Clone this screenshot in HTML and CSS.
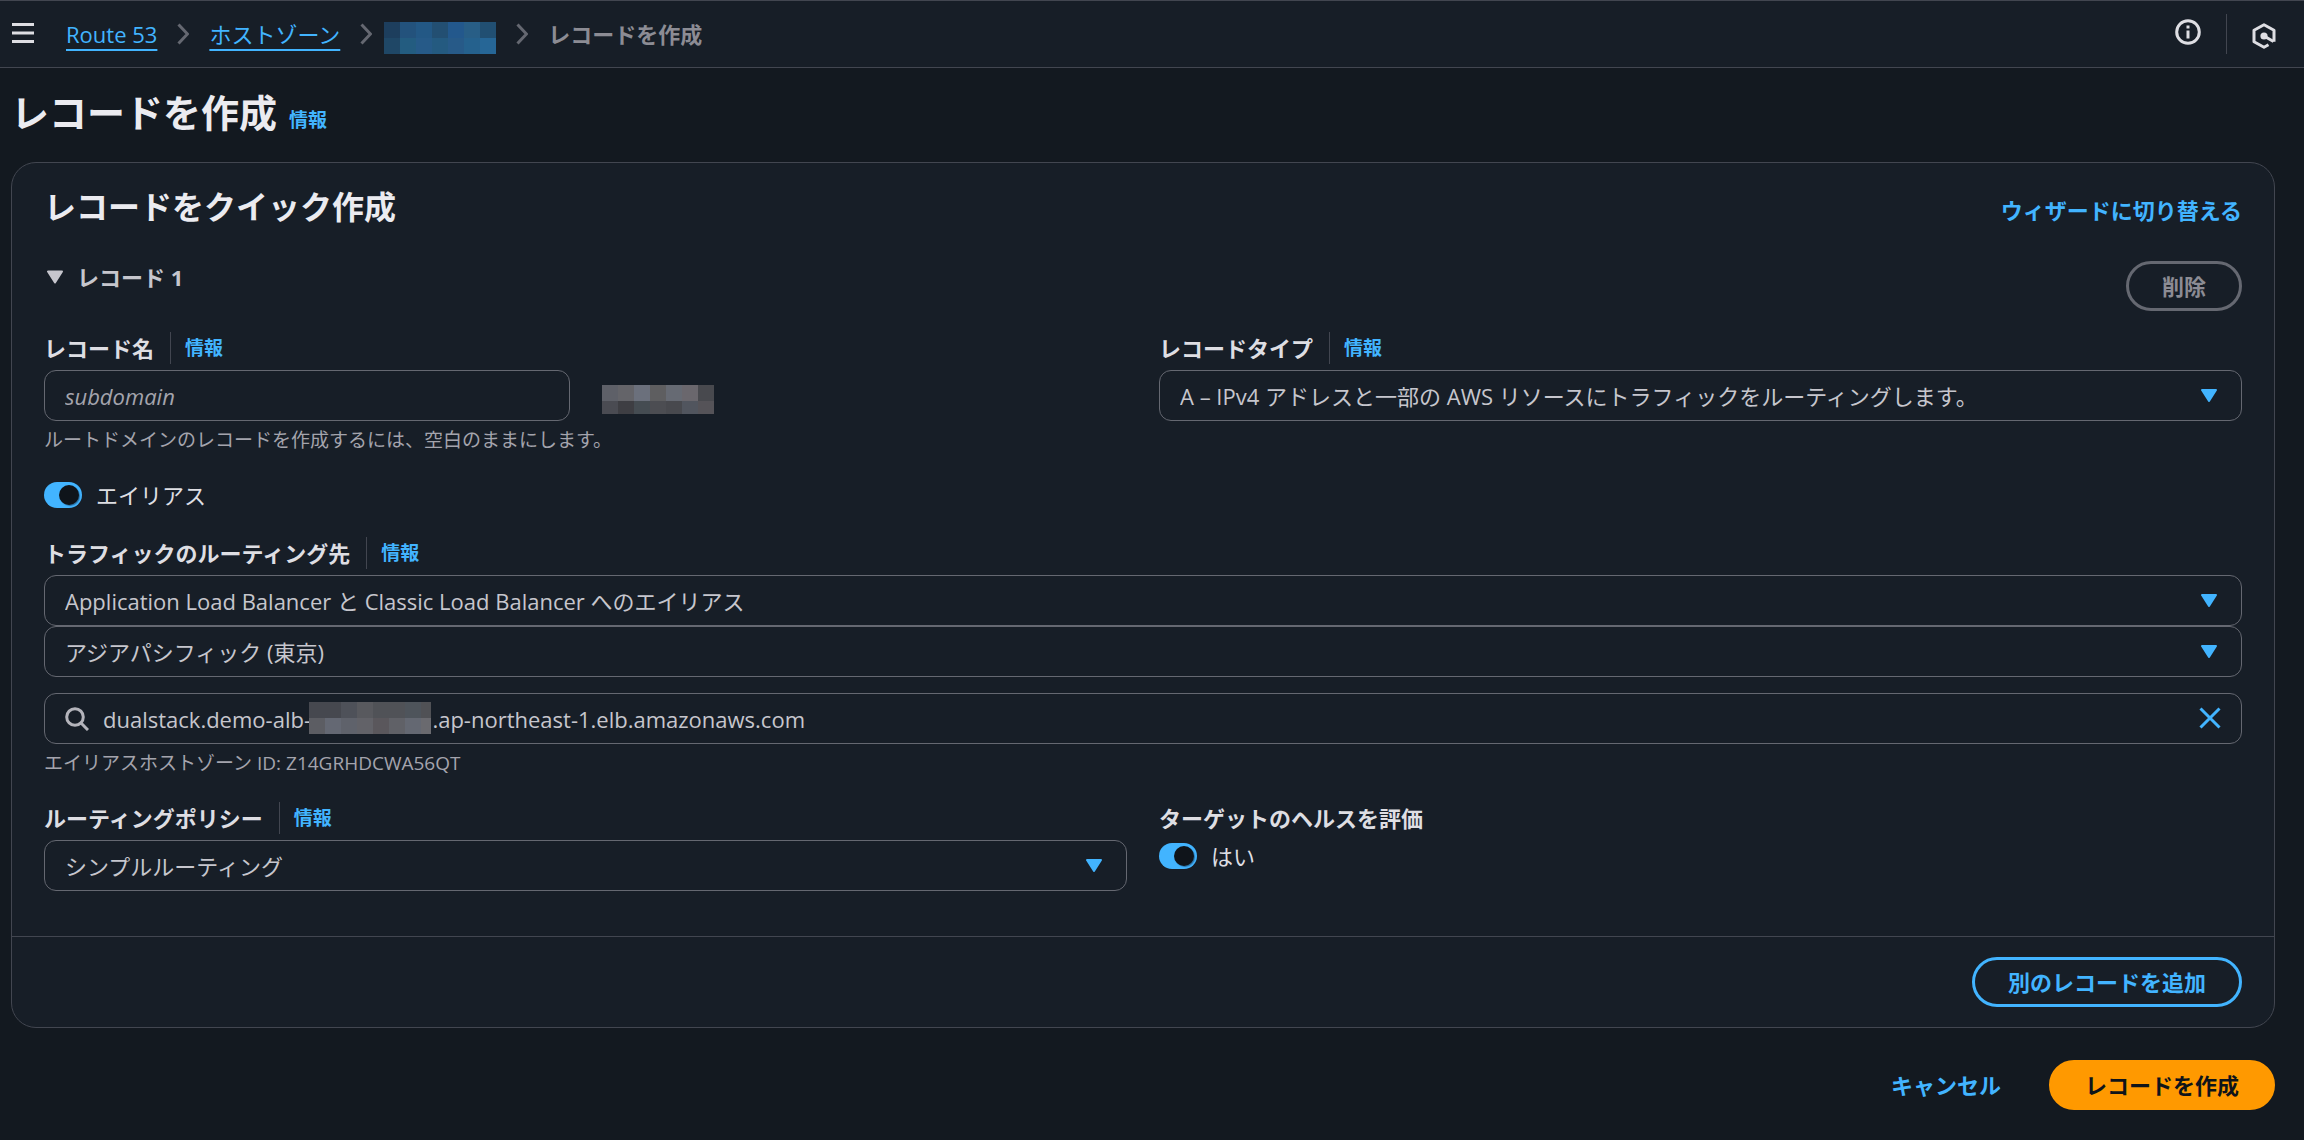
FILE: index.html
```html
<!doctype html>
<html lang="ja">
<head>
<meta charset="utf-8">
<title>レコードを作成 | Route 53</title>
<link rel="stylesheet" href="styles.css">
</head>

<body>
<header class="topbar">
    <button class="icon-btn menu" type="button" aria-label="メニュー">
        <svg width="22" height="20" viewBox="0 0 22 20"><path d="M0 1.5h22M0 10h22M0 18.5h22" stroke="currentColor" stroke-width="3"/></svg>
    </button>
    <nav class="crumbs">
        <a class="crumb" href="#">Route 53</a>
        <svg class="sep" width="12" height="22" viewBox="0 0 12 22"><path d="M1.5 1.5l9 9.5-9 9.5"/></svg>
        <a class="crumb" href="#">ホストゾーン</a>
        <svg class="sep sep-tight" width="12" height="22" viewBox="0 0 12 22"><path d="M1.5 1.5l9 9.5-9 9.5"/></svg>
        <a class="crumb-masked" href="#" aria-label="ドメイン">
            <svg class="mosaic" width="112" height="32" viewBox="0 0 112 32" shape-rendering="crispEdges">
                <path fill="#1d3e5d" d="M0 0h16v16H0z"/><path fill="#23527c" d="M16 0h16v16H16z"/><path fill="#235885" d="M32 0h16v16H32z"/><path fill="#234f72" d="M48 0h16v16H48z"/><path fill="#23588c" d="M64 0h16v16H64z"/><path fill="#285e86" d="M80 0h16v16H80z"/><path fill="#214f72" d="M96 0h16v16H96z"/>
                <path fill="#1f4766" d="M0 16h16v16H0z"/><path fill="#235c80" d="M16 16h16v16H16z"/><path fill="#265a88" d="M32 16h16v16H32z"/><path fill="#245a80" d="M48 16h16v16H48z"/><path fill="#275a88" d="M64 16h16v16H64z"/><path fill="#25618d" d="M80 16h16v16H80z"/><path fill="#266696" d="M96 16h16v16H96z"/>
            </svg>
        </a>
        <svg class="sep" width="12" height="22" viewBox="0 0 12 22"><path d="M1.5 1.5l9 9.5-9 9.5"/></svg>
        <span class="crumb-current">レコードを作成</span>
    </nav>
    <div class="tools">
        <button class="icon-btn help" type="button" aria-label="情報パネル">
            <svg width="26" height="26" viewBox="0 0 26 26" fill="none" stroke="currentColor" stroke-width="3"><circle cx="13" cy="13" r="11.3"/><path d="M13 11.5v8M13 6.5v3"/></svg>
        </button>
        <span class="tools-line"></span>
        <button class="icon-btn hex" type="button" aria-label="ツール">
            <svg width="24" height="26" viewBox="0 0 24 26" fill="none" stroke="currentColor" stroke-width="3" stroke-linejoin="round"><path d="M16.5 21.8L12 24.2 2 18.8V7.2L12 1.8l10 5.4v11.6"/><path d="M12 13l9.5 5.5"/><circle cx="12" cy="13" r="3.6" fill="currentColor" stroke="none"/></svg>
        </button>
    </div>
</header>

<main class="page">
    <div class="page-head">
        <h1 class="title">レコードを作成</h1>
        <a class="info" href="#">情報</a>
    </div>

    <form>
    <section class="card">
        <div class="card-body">
            <div class="card-head">
                <h2 class="subtitle">レコードをクイック作成</h2>
                <a class="switch-link" href="#">ウィザードに切り替える</a>
            </div>
            <div class="record-head">
                <button class="expander" type="button">
                    <svg width="16" height="14" viewBox="0 0 16 13"><path d="M1 1h14L8 12z" fill="currentColor" stroke="currentColor" stroke-width="2" stroke-linejoin="round"/></svg>
                    レコード 1
                </button>
                <button class="btn btn-disabled" type="button" disabled>削除</button>
            </div>

            <div class="rows">
                <div class="cols">
                    <div class="field">
                        <div class="label-row"><label class="label" for="name">レコード名</label><a class="info info-line" href="#">情報</a></div>
                        <div class="cols name-row">
                            <input class="control" id="name" type="text" placeholder="subdomain">
                            <svg class="mosaic" width="112" height="29" viewBox="0 0 112 29" shape-rendering="crispEdges">
                                <path fill="#5e6068" d="M0 0h16v16H0z"/><path fill="#646469" d="M16 0h16v16H16z"/><path fill="#6b707c" d="M32 0h16v16H32z"/><path fill="#5e5e60" d="M48 0h16v16H48z"/><path fill="#666a73" d="M64 0h16v16H64z"/><path fill="#6a676d" d="M80 0h16v16H80z"/><path fill="#48494e" d="M96 0h16v16H96z"/>
                                <path fill="#4a4b52" d="M0 16h16v13H0z"/><path fill="#3e3e43" d="M16 16h16v13H16z"/><path fill="#454c52" d="M32 16h16v13H32z"/><path fill="#4c4d52" d="M48 16h16v13H48z"/><path fill="#48494e" d="M64 16h16v13H64z"/><path fill="#51555e" d="M80 16h16v13H80z"/><path fill="#555358" d="M96 16h16v13H96z"/>
                            </svg>
                        </div>
                        <p class="hint">ルートドメインのレコードを作成するには、空白のままにします。</p>
                    </div>
                    <div class="field">
                        <div class="label-row"><label class="label" for="type">レコードタイプ</label><a class="info info-line" href="#">情報</a></div>
                        <div class="select">
                            <select class="control" id="type"><option>A – IPv4 アドレスと一部の AWS リソースにトラフィックをルーティングします。</option></select>
                            <svg class="caret" width="16" height="13" viewBox="0 0 16 13"><path d="M1 1h14L8 12z"/></svg>
                        </div>
                    </div>
                </div>

                <label class="toggle"><input type="checkbox" checked>エイリアス</label>

                <div class="field">
                    <div class="label-row"><label class="label" for="target">トラフィックのルーティング先</label><a class="info info-line" href="#">情報</a></div>
                    <div class="select">
                        <select class="control" id="target"><option>Application Load Balancer と Classic Load Balancer へのエイリアス</option></select>
                        <svg class="caret" width="16" height="13" viewBox="0 0 16 13"><path d="M1 1h14L8 12z"/></svg>
                    </div>
                    <div class="select">
                        <select class="control" aria-label="リージョン"><option>アジアパシフィック (東京)</option></select>
                        <svg class="caret" width="16" height="13" viewBox="0 0 16 13"><path d="M1 1h14L8 12z"/></svg>
                    </div>
                    <div class="search">
                        <svg class="search-icon" width="24" height="24" viewBox="0 0 24 24" fill="none" stroke="currentColor" stroke-width="3"><circle cx="10" cy="10" r="8.3"/><path d="M16 16l7 7"/></svg>
                        <input class="control" type="text" aria-label="ロードバランサー" value="dualstack.demo-alb-&emsp;&emsp;&emsp;&emsp;&emsp;&nbsp;&nbsp;.ap-northeast-1.elb.amazonaws.com">
                        <svg class="mosaic search-mask" width="122" height="32" viewBox="0 0 122 32" shape-rendering="crispEdges">
                            <path fill="#46484f" d="M0 0h32v16H0z"/><path fill="#4e5159" d="M32 0h16v16H32z"/><path fill="#58595e" d="M48 0h16v16H48z"/><path fill="#505257" d="M64 0h32v16H64z"/><path fill="#4e545b" d="M96 0h16v16H96z"/><path fill="#505155" d="M112 0h10v16h-10z"/>
                            <path fill="#5c5d63" d="M0 16h16v16H0z"/><path fill="#646873" d="M16 16h16v16H16z"/><path fill="#5f626b" d="M32 16h16v16H32z"/><path fill="#626268" d="M48 16h16v16H48z"/><path fill="#5a575c" d="M64 16h16v16H64z"/><path fill="#606167" d="M80 16h16v16H80z"/><path fill="#646872" d="M96 16h16v16H96z"/><path fill="#6a6a6f" d="M112 16h10v16h-10z"/>
                        </svg>
                        <button class="icon-btn clear" type="button" aria-label="クリア">
                            <svg width="22" height="22" viewBox="0 0 22 22"><path d="M1.5 1.5l19 19M20.5 1.5l-19 19" stroke="currentColor" stroke-width="3"/></svg>
                        </button>
                    </div>
                    <p class="hint">エイリアスホストゾーン ID: Z14GRHDCWA56QT</p>
                </div>

                <div class="cols">
                    <div class="field">
                        <div class="label-row"><label class="label" for="policy">ルーティングポリシー</label><a class="info info-line" href="#">情報</a></div>
                        <div class="select">
                            <select class="control" id="policy"><option>シンプルルーティング</option></select>
                            <svg class="caret" width="16" height="13" viewBox="0 0 16 13"><path d="M1 1h14L8 12z"/></svg>
                        </div>
                    </div>
                    <div class="field">
                        <div class="label-row"><span class="label" id="health">ターゲットのヘルスを評価</span></div>
                        <label class="toggle"><input type="checkbox" aria-describedby="health" checked>はい</label>
                    </div>
                </div>
            </div>
        </div>
        <div class="card-foot">
            <button class="btn btn-outline" type="button">別のレコードを追加</button>
        </div>
    </section>

    <div class="actions">
        <button class="btn btn-link" type="button">キャンセル</button>
        <button class="btn btn-primary" type="submit">レコードを作成</button>
    </div>
    </form>
</main>
</body>
</html>
```
FILE: styles.css
```css
* { box-sizing: border-box; }
body { margin: 0; background-color: #131920; color: #dedee3; font-family: "Open Sans", "Noto Sans CJK JP", sans-serif; font-size: 22px; line-height: 32px; }
h1, h2, p { margin: 0; }
a { color: #42b4ff; text-decoration: none; }
button, input, select { font: inherit; color: inherit; margin: 0; }
button { cursor: pointer; }
svg { display: block; flex: none; }

/* top bar */
.topbar { display: flex; align-items: center; height: 68px; padding: 0 28px 0 12px; background-color: #171e27; border-top: 1px solid #424650; border-bottom: 1px solid #424650; }
.icon-btn { padding: 0; border: none; background: none; color: #dedee3; }
.menu { margin-right: 32px; padding-bottom: 2px; }
.crumbs { display: flex; align-items: center; }
.crumb { text-decoration: underline; text-decoration-thickness: 2px; text-underline-offset: 6px; }
.crumb-masked { padding-top: 8px; }
.crumb-current { color: #8c8c94; font-weight: bold; }
.sep { margin: 0 20px; fill: none; stroke: #656871; stroke-width: 3; }
.sep-tight { margin-right: 12px; }
.tools { display: flex; align-items: center; gap: 25px; margin-left: auto; }
.tools-line { width: 1px; height: 40px; background-color: #424650; }
.help { padding-bottom: 4px; }
.hex { padding-top: 4px; }

/* page */
.page { padding: 20px 29px 30px 11px; }
.page-head { display: flex; align-items: baseline; gap: 12px; margin-bottom: 26px; }
.title { font-size: 38px; line-height: 48px; color: #ebebf0; }
.info { font-size: 19px; font-weight: bold; }
.card { background-color: #171e27; border: 1px solid #424650; border-radius: 25px; }
.card-body { padding: 25px 32px 45px; }
.card-head { display: flex; align-items: flex-end; justify-content: space-between; margin-bottom: 35px; }
.subtitle { font-size: 32px; line-height: 38px; color: #ebebf0; }
.switch-link { font-weight: bold; }
.record-head { display: flex; align-items: flex-start; justify-content: space-between; margin-bottom: 21px; }
.expander { display: flex; align-items: center; gap: 14px; padding: 0 3px; border: none; background: none; color: #c6c6cd; font-weight: bold; }
.rows { display: grid; gap: 26px; }
.cols { display: grid; grid-template-columns: 1fr 1fr; gap: 32px; }
.name-row { align-items: end; }
.name-row .mosaic { margin-bottom: 7px; }

/* form fields */
.label-row { display: flex; margin-bottom: 6px; }
.label { font-weight: bold; }
.info-line { margin-left: 16px; padding-left: 14px; border-left: 1px solid #424650; }
.control { display: block; width: 100%; height: 51px; padding: 0 20px; background-color: #171e27; color: #c6c6cd; border: 1px solid #656871; border-radius: 12px; appearance: none; }
.control::placeholder { color: #a4a4ad; font-style: italic; opacity: 1; }
.hint { margin-top: 6px; font-size: 19px; line-height: 26px; color: #a4a4ad; }
.select, .search { position: relative; }
.caret { position: absolute; top: 19px; right: 25px; fill: #42b4ff; stroke: #42b4ff; stroke-width: 2; stroke-linejoin: round; pointer-events: none; }
.search { margin-top: 16px; }
.search .control { padding-left: 58px; }
.search-icon { position: absolute; top: 14px; left: 21px; color: #b4b4bb; }
.search-mask { position: absolute; top: 9px; left: 265px; }
.clear { position: absolute; top: 14px; right: 21px; color: #42b4ff; }

.toggle { display: flex; align-items: center; gap: 14px; cursor: pointer; }
.toggle input { width: 38px; height: 26px; padding: 3px; display: flex; justify-content: flex-end; appearance: none; background-color: #42b4ff; border-radius: 13px; }
.toggle input::before { content: ""; width: 20px; height: 20px; border-radius: 50%; background-color: #0f141a; box-shadow: 1px 1px 1px rgba(0, 7, 22, .4); }
.toggle input:not(:checked) { justify-content: flex-start; background-color: #656871; }

/* buttons */
.card-foot { display: flex; justify-content: flex-end; padding: 20px 32px; border-top: 1px solid #424650; }
.btn { height: 50px; padding: 0 33px; border: 3px solid transparent; border-radius: 25px; background: none; font-weight: bold; line-height: 32px; }
.btn-disabled { border-color: #656871; color: #8c8c94; cursor: default; }
.btn-outline { border-color: #42b4ff; color: #42b4ff; }
.btn-link { color: #42b4ff; }
.btn-primary { background-color: #ff9900; border-color: #ff9900; color: #0f141a; }
.actions { display: flex; justify-content: flex-end; gap: 12px; margin-top: 32px; }
```
